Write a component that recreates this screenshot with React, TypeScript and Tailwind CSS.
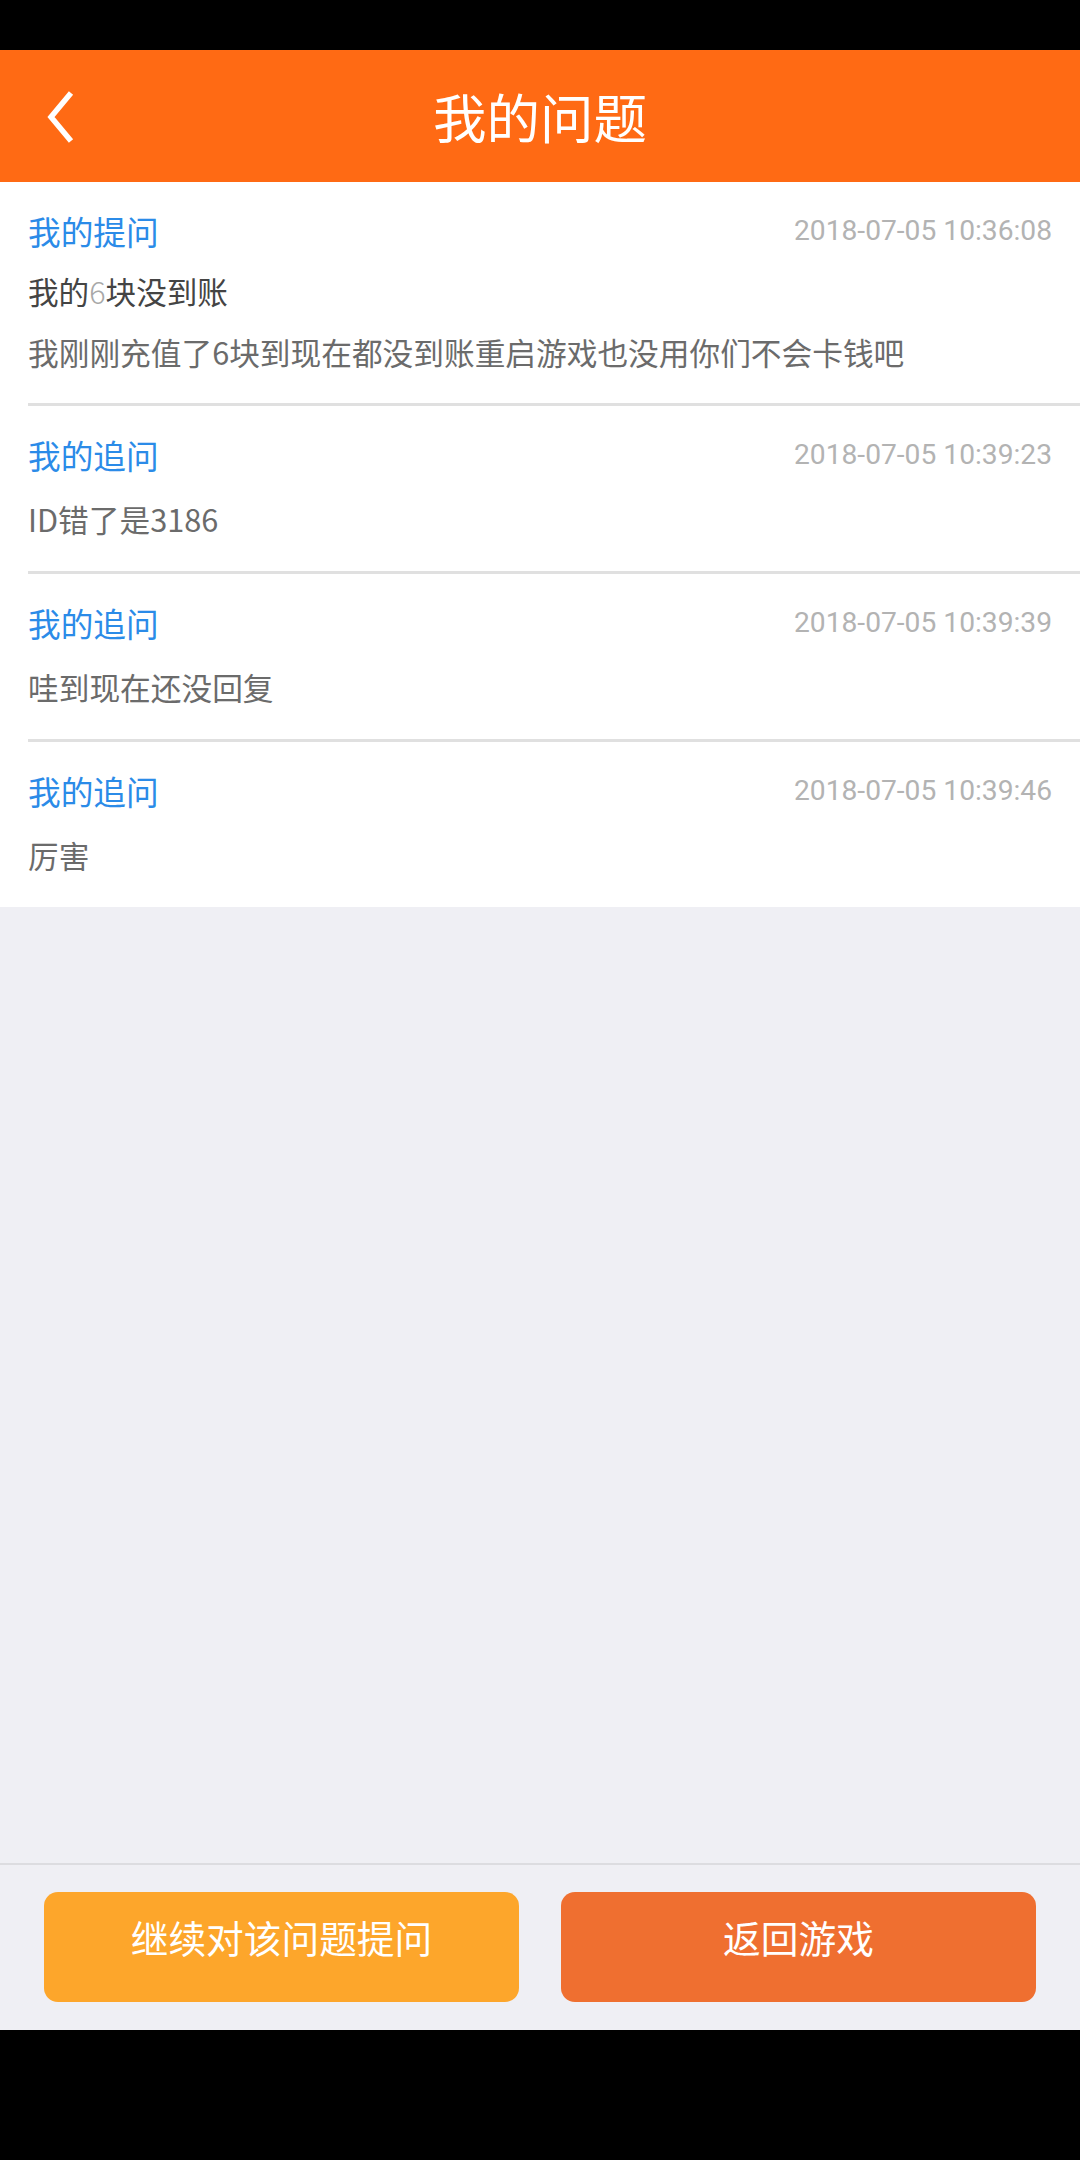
import React from 'react';

interface Entry {
  label: string;
  time: string;
  title?: React.ReactNode;
  body: string;
}

const entries: Entry[] = [
  {
    label: '我的提问',
    time: '2018-07-05 10:36:08',
    title: (
      <>
        我的<span className="font-extralight text-[#a8a8a8]">6</span>块没到账
      </>
    ),
    body: '我刚刚充值了6块到现在都没到账重启游戏也没用你们不会卡钱吧',
  },
  { label: '我的追问', time: '2018-07-05 10:39:23', body: 'ID错了是3186' },
  { label: '我的追问', time: '2018-07-05 10:39:39', body: '哇到现在还没回复' },
  { label: '我的追问', time: '2018-07-05 10:39:46', body: '厉害' },
];

const cjk = "font-['Noto_Sans_CJK_SC','Noto_Sans',sans-serif]";

const App = () => {
  return (
    <div className={`w-[1080px] h-[2160px] flex flex-col bg-black ${cjk}`}>
      {/* status bar */}
      <div className="h-[50px] shrink-0 bg-black" />

      {/* header */}
      <div className="h-[132px] shrink-0 bg-[#ff6a14] flex items-center relative">
        <button className="absolute left-[44px] top-[38px] p-0" aria-label="back">
          <svg width="34" height="56" viewBox="0 0 34 56">
            <path d="M27 5 L7 29 L27 53" fill="none" stroke="#ffffff" strokeWidth="5.5" strokeLinecap="butt" strokeLinejoin="miter" />
          </svg>
        </button>
        <h1 className="w-full text-center text-white text-[53.5px] leading-none font-normal">我的问题</h1>
      </div>

      {/* list */}
      <div className="flex-1 bg-[#efeff4] flex flex-col">
        <div className="bg-white">
          {entries.map((entry, i) => {
            const last = i === entries.length - 1;
            return (
              <div
                key={i}
                className={`ml-[28px] pr-[28px] ${i === 0 ? 'pt-[29px] pb-[31px]' : 'pt-[29px] pb-[32px]'} ${
                  last ? '' : 'border-b-[3px] border-[#e0e0e0]'
                }`}
              >
                <div className="h-10 flex items-center justify-between">
                  <span className="text-[32.7px] text-[#2b8be8] leading-none">{entry.label}</span>
                  <span className="text-[28.2px] text-[#b3b3b3] leading-none font-['Roboto',sans-serif]">
                    {entry.time}
                  </span>
                </div>
                {entry.title && (
                  <div className="h-10 mt-[20px] flex items-center text-[30.6px] text-[#444444] leading-none">
                    {entry.title}
                  </div>
                )}
                <div
                  className={`h-10 ${entry.title ? 'mt-[21px]' : 'mt-[24px]'} flex items-center text-[30.7px] text-[#6b6b6b] leading-none whitespace-nowrap`}
                >
                  {entry.body}
                </div>
              </div>
            );
          })}
        </div>
      </div>

      {/* bottom bar */}
      <div className="h-[167px] shrink-0 bg-[#efeff4] border-t-[2px] border-[#dcdce0] pt-[27px] px-[44px] flex gap-[42px]">
        <button className="w-[475px] h-[110px] rounded-[14px] bg-[#fda62b] text-white text-[37.7px] leading-none pb-[20px] flex items-center justify-center">
          继续对该问题提问
        </button>
        <button className="w-[475px] h-[110px] rounded-[14px] bg-[#ef6f30] text-white text-[37.7px] leading-none pb-[20px] flex items-center justify-center">
          返回游戏
        </button>
      </div>

      {/* nav bar */}
      <div className="h-[130px] shrink-0 bg-black" />
    </div>
  );
};

export default App;
